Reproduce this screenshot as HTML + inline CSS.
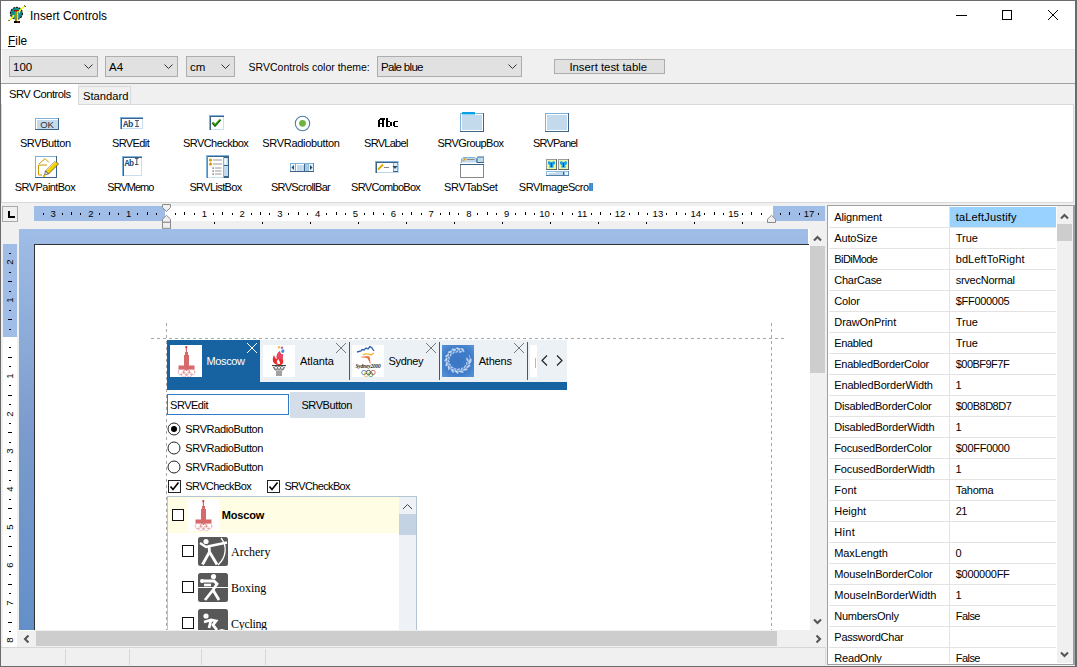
<!DOCTYPE html><html><head><meta charset="utf-8"><style>
html,body{margin:0;padding:0;}
body{width:1077px;height:667px;position:relative;overflow:hidden;background:#f0f0f0;font-family:"Liberation Sans",sans-serif;}
div{position:absolute;box-sizing:border-box;}
.t{position:absolute;white-space:nowrap;}
</style></head><body>
<div style="left:0px;top:0px;width:1077px;height:50px;background:#fff;"></div>
<div style="left:0px;top:49px;width:1077px;height:1px;background:#e8e8e8;"></div>
<svg style="position:absolute;left:6px;top:4px;" width="22" height="22" viewBox="0 0 22 22"><circle cx="10.4" cy="9.3" r="6" fill="#0f8c8c" stroke="#000" stroke-width="1.1" stroke-dasharray="2 1"/>
<rect x="9" y="6.5" width="2.3" height="10.5" fill="#9a9400"/><rect x="11.3" y="7" width="0.9" height="10" fill="#fff"/>
<rect x="8" y="6" width="5" height="1.3" fill="#b00000"/>
<rect x="8" y="17" width="6" height="2" fill="#000"/><rect x="11" y="17" width="1.5" height="2" fill="#c00000"/>
<path d="M3 16.5 L7.5 12.5 L8 11.5 M13 8 L14 6 L18.5 2" stroke="#ffff00" stroke-width="1.4" fill="none"/>
<path d="M6 11.5 L8.5 10.5 L7.5 13.5 Z M12.5 7 L15 6 L13.5 9.5 Z" fill="#ffff00"/>
<path d="M2.5 17 L3.5 16" stroke="#000" stroke-width="1"/><path d="M18.5 1.5 L19.5 3" stroke="#000" stroke-width="1"/></svg>
<span class="t " style="left:30px;top:11px;font-size:11.85px;line-height:11.85px;color:#000;">Insert Controls</span>
<div style="left:956px;top:15px;width:11px;height:1px;background:#000;"></div>
<div style="left:1002px;top:10px;width:10px;height:10px;border:1px solid #000;"></div>
<svg style="position:absolute;left:1047px;top:9px;" width="12" height="12" viewBox="0 0 12 12"><path d="M1 1 L11 11 M11 1 L1 11" stroke="#000" stroke-width="1"/></svg>
<span class="t " style="left:8px;top:36px;font-size:11.85px;line-height:11.85px;color:#000;"><u style="text-underline-offset:1px">F</u>ile</span>
<div style="left:0px;top:83px;width:1077px;height:1px;background:#a0a0a0;"></div>
<div style="left:1px;top:50px;width:1px;height:33px;background:#fff;"></div>
<div style="left:9px;top:56px;width:89px;height:21px;background:#e1e1e1;border:1px solid #adadad;"></div>
<span class="t " style="left:13px;top:62px;font-size:11.5px;line-height:11.5px;color:#000;">100</span>
<svg style="position:absolute;left:84px;top:64px;" width="9" height="5" viewBox="0 0 9 5"><path d="M0.5 0.5 L4.5 4.5 L8.5 0.5" stroke="#333" stroke-width="1" fill="none"/></svg>
<div style="left:105px;top:56px;width:73px;height:21px;background:#e1e1e1;border:1px solid #adadad;"></div>
<span class="t " style="left:109px;top:62px;font-size:11.5px;line-height:11.5px;color:#000;">A4</span>
<svg style="position:absolute;left:164px;top:64px;" width="9" height="5" viewBox="0 0 9 5"><path d="M0.5 0.5 L4.5 4.5 L8.5 0.5" stroke="#333" stroke-width="1" fill="none"/></svg>
<div style="left:186px;top:56px;width:49px;height:21px;background:#e1e1e1;border:1px solid #adadad;"></div>
<span class="t " style="left:190px;top:62px;font-size:11.5px;line-height:11.5px;color:#000;">cm</span>
<svg style="position:absolute;left:221px;top:64px;" width="9" height="5" viewBox="0 0 9 5"><path d="M0.5 0.5 L4.5 4.5 L8.5 0.5" stroke="#333" stroke-width="1" fill="none"/></svg>
<span class="t " style="left:248.6px;top:62px;font-size:10.5px;line-height:10.5px;color:#000;">SRVControls color theme:</span>
<div style="left:377px;top:56px;width:145px;height:21px;background:#e1e1e1;border:1px solid #adadad;"></div>
<span class="t " style="left:381px;top:62px;font-size:11.5px;line-height:11.5px;color:#000;letter-spacing:-0.680px;">Pale blue</span>
<svg style="position:absolute;left:508px;top:64px;" width="9" height="5" viewBox="0 0 9 5"><path d="M0.5 0.5 L4.5 4.5 L8.5 0.5" stroke="#333" stroke-width="1" fill="none"/></svg>
<div style="left:554px;top:59px;width:111px;height:15px;background:#e1e1e1;border:1px solid #adadad;"></div>
<span class="t " style="left:569.4px;top:62px;font-size:11.36px;line-height:11.36px;color:#000;">Insert test table</span>
<div style="left:1px;top:84px;width:77px;height:21px;background:#fff;"></div>
<div style="left:78px;top:86px;width:53px;height:19px;background:#f0f0f0;border:1px solid #d9d9d9;border-bottom:none;"></div>
<span class="t " style="left:9px;top:89px;font-size:11.2px;line-height:11.2px;color:#000;letter-spacing:-0.506px;">SRV Controls</span>
<span class="t " style="left:83px;top:91px;font-size:11.2px;line-height:11.2px;color:#000;">Standard</span>
<div style="left:1px;top:104px;width:1073px;height:99px;background:#fff;border:1px solid #d9d9d9;border-top:none;"></div>
<div style="left:78px;top:104px;width:996px;height:1px;background:#d9d9d9;"></div>
<span class="t " style="left:19.9px;top:138px;font-size:11px;line-height:11px;color:#000;letter-spacing:-0.383px;">SRVButton</span>
<span class="t " style="left:112.0px;top:138px;font-size:11px;line-height:11px;color:#000;letter-spacing:-0.615px;">SRVEdit</span>
<span class="t " style="left:182.9px;top:138px;font-size:11px;line-height:11px;color:#000;letter-spacing:-0.536px;">SRVCheckbox</span>
<span class="t " style="left:262.3px;top:138px;font-size:11px;line-height:11px;color:#000;letter-spacing:-0.315px;">SRVRadiobutton</span>
<span class="t " style="left:364.0px;top:138px;font-size:11px;line-height:11px;color:#000;letter-spacing:-0.708px;">SRVLabel</span>
<span class="t " style="left:437.5px;top:138px;font-size:11px;line-height:11px;color:#000;letter-spacing:-0.548px;">SRVGroupBox</span>
<span class="t " style="left:533.0px;top:138px;font-size:11px;line-height:11px;color:#000;letter-spacing:-0.797px;">SRVPanel</span>
<span class="t " style="left:14.8px;top:182px;font-size:11px;line-height:11px;color:#000;letter-spacing:-0.558px;">SRVPaintBox</span>
<span class="t " style="left:107.3px;top:182px;font-size:11px;line-height:11px;color:#000;letter-spacing:-0.981px;">SRVMemo</span>
<span class="t " style="left:189.4px;top:182px;font-size:11px;line-height:11px;color:#000;letter-spacing:-0.624px;">SRVListBox</span>
<span class="t " style="left:270.9px;top:182px;font-size:11px;line-height:11px;color:#000;letter-spacing:-0.650px;">SRVScrollBar</span>
<span class="t " style="left:351.1px;top:182px;font-size:11px;line-height:11px;color:#000;letter-spacing:-0.706px;">SRVComboBox</span>
<span class="t " style="left:444.1px;top:182px;font-size:11px;line-height:11px;color:#000;letter-spacing:-0.363px;">SRVTabSet</span>
<span class="t " style="left:518.8px;top:182px;font-size:11px;line-height:11px;color:#000;letter-spacing:-0.478px;">SRVImageScroll</span>
<svg style="position:absolute;left:35px;top:118px;" width="24" height="12" viewBox="0 0 24 12"><rect x="0" y="0" width="24" height="12" fill="#3b6488"/><rect x="0" y="0" width="23" height="11" fill="#7fb2da"/>
<rect x="1" y="1" width="22" height="10" fill="#fff"/><rect x="2" y="2" width="21" height="9" fill="#c3d9ec"/>
<text x="12" y="10" font-family="Liberation Sans" font-size="9.5" text-anchor="middle" fill="#333">OK</text></svg>
<svg style="position:absolute;left:120px;top:117px;" width="23" height="12" viewBox="0 0 23 12"><rect x="0" y="0" width="23" height="12" fill="#c9def0"/><rect x="0" y="0" width="23" height="2" fill="#3b6488"/><rect x="0" y="0" width="2" height="12" fill="#3b6488"/>
<rect x="0" y="0" width="23" height="1" fill="#7fb2da"/><rect x="0" y="0" width="1" height="12" fill="#7fb2da"/>
<rect x="2" y="2" width="20" height="9" fill="#fff"/>
<text x="3" y="10" font-family="Liberation Mono" font-weight="bold" font-size="9" fill="#1f4b70" letter-spacing="-0.5">Ab</text>
<path d="M15 3.5 H19 M17 3.5 V9.5 M15 9.5 H19" stroke="#555" stroke-width="1" fill="none"/></svg>
<svg style="position:absolute;left:209px;top:115px;" width="15" height="15" viewBox="0 0 15 15"><rect x="0" y="0" width="15" height="15" fill="#c9def0"/><rect x="0" y="0" width="15" height="2" fill="#3b6488"/><rect x="0" y="0" width="2" height="15" fill="#3b6488"/>
<rect x="0" y="0" width="15" height="1" fill="#7fb2da"/><rect x="0" y="0" width="1" height="15" fill="#7fb2da"/>
<rect x="2" y="2" width="12" height="12" fill="#fff"/>
<path d="M3.5 7.5 L6 10.5 L11.5 4.5" stroke="#0d6a0d" stroke-width="2.2" fill="none"/><path d="M3.5 7 L6 9.5 L11 4" stroke="#7cc22a" stroke-width="1" fill="none"/></svg>
<svg style="position:absolute;left:294px;top:115px;" width="17" height="17" viewBox="0 0 17 17"><circle cx="8.5" cy="8.5" r="7.2" fill="#fff" stroke="#4d7ea8" stroke-width="1.1"/>
<circle cx="8.5" cy="8.3" r="3.4" fill="#6db33f"/></svg>
<svg style="position:absolute;left:377px;top:117px;" width="22" height="11" viewBox="0 0 22 11"><g fill="#000" shape-rendering="crispEdges"><rect x="3" y="1" width="5" height="1"/><rect x="2" y="2" width="6" height="1"/><rect x="1" y="3" width="2" height="7"/><rect x="5" y="1" width="2" height="9"/><rect x="3" y="6" width="2" height="1"/><rect x="9" y="1" width="2" height="9"/><rect x="11" y="4" width="2" height="1"/><rect x="13" y="5" width="2" height="4"/><rect x="11" y="9" width="2" height="1"/><rect x="12" y="4" width="1" height="1"/><rect x="12" y="9" width="1" height="1"/><rect x="16" y="5" width="2" height="4"/><rect x="17" y="4" width="4" height="1"/><rect x="17" y="9" width="4" height="1"/></g></svg>
<svg style="position:absolute;left:460px;top:112px;" width="25" height="20" viewBox="0 0 25 20"><rect x="0" y="1" width="24" height="19" fill="#3b6488"/><rect x="0" y="1" width="23" height="18" fill="#7fb2da"/>
<rect x="1" y="2" width="22" height="17" fill="#fff"/><rect x="2" y="3" width="20" height="15" fill="#c3d9ec"/>
<rect x="2" y="0" width="13" height="2.5" rx="0.5" fill="#0aa0e8"/></svg>
<svg style="position:absolute;left:545px;top:113px;" width="24" height="19" viewBox="0 0 24 19"><rect x="0" y="0" width="24" height="19" fill="#3b6488"/><rect x="0" y="0" width="23" height="18" fill="#7fb2da"/>
<rect x="1" y="1" width="22" height="17" fill="#fff"/><rect x="2" y="2" width="20" height="15" fill="#c3d9ec"/></svg>
<svg style="position:absolute;left:35px;top:156px;" width="25" height="22" viewBox="0 0 25 22"><rect x="0" y="0" width="22" height="22" fill="#3b6488"/><rect x="0" y="0" width="21" height="21" fill="#7fb2da"/><rect x="1" y="1" width="20" height="20" fill="#fff"/>
<path d="M3.5 9 V19 H7 M3.5 9 H12 M4 8 L10 2.5 L14 6.5" stroke="#c99a00" stroke-width="1" fill="none"/>
<path d="M10.5 15 L20.5 5 L23.5 8 L13.5 18 Z" fill="#f4d000" stroke="#3a3a3a" stroke-width="0.7"/><path d="M11.5 14.5 L21 5" stroke="#fff3a0" stroke-width="0.8"/><path d="M10.5 15 L13.5 18 L9.5 19 Z" fill="#e0e0e0" stroke="#333" stroke-width="0.6"/>
<rect x="8" y="19" width="2" height="2" fill="#f3b400"/></svg>
<svg style="position:absolute;left:122px;top:156px;" width="20" height="20" viewBox="0 0 20 20"><rect x="0" y="0" width="20" height="20" fill="#c9def0"/><rect x="0" y="0" width="20" height="2" fill="#3b6488"/><rect x="0" y="0" width="2" height="20" fill="#3b6488"/>
<rect x="0" y="0" width="20" height="1" fill="#7fb2da"/><rect x="0" y="0" width="1" height="20" fill="#7fb2da"/>
<rect x="2" y="2" width="17" height="17" fill="#fff"/>
<text x="2.5" y="10" font-family="Liberation Mono" font-weight="bold" font-size="8.5" fill="#1f4b70" letter-spacing="-0.6">Ab</text>
<path d="M13 2.5 H16.5 M14.8 2.5 V8.5 M13 8.5 H16.5" stroke="#555" stroke-width="1" fill="none"/></svg>
<svg style="position:absolute;left:206px;top:155px;" width="23" height="23" viewBox="0 0 23 23"><rect x="0" y="0" width="23" height="23" fill="#3b6488"/><rect x="0" y="0" width="1.5" height="23" fill="#7fb2da"/><rect x="0" y="0" width="23" height="1" fill="#7fb2da"/>
<rect x="2" y="2" width="15.5" height="20" fill="#fff"/><rect x="2" y="22" width="15.5" height="1" fill="#c9def0"/>
<rect x="18" y="3" width="4" height="18" fill="#c3d9ec"/><rect x="18.5" y="3.5" width="2" height="6" fill="#fff"/>
<rect x="18" y="10" width="4" height="1" fill="#3b6488"/>
<circle cx="4.5" cy="5" r="1.6" fill="#d89b00"/><circle cx="4.5" cy="9" r="1.6" fill="#d89b00"/>
<rect x="7" y="4.5" width="9" height="1" fill="#999"/><rect x="7" y="8.5" width="9" height="1" fill="#999"/>
<rect x="6.5" y="12.5" width="1.2" height="1.2" fill="#333"/><rect x="9" y="12.5" width="6.5" height="1" fill="#999"/>
<rect x="6.5" y="15.5" width="1.2" height="1.2" fill="#333"/><rect x="9" y="15.5" width="6.5" height="1" fill="#999"/>
<rect x="6.5" y="18.5" width="1.2" height="1.2" fill="#333"/><rect x="9" y="18.5" width="6.5" height="1" fill="#999"/></svg>
<svg style="position:absolute;left:290px;top:163px;" width="24" height="9" viewBox="0 0 24 9"><rect x="0" y="0" width="24" height="9" fill="#3b6488"/><rect x="0" y="0" width="23.5" height="8" fill="#7fb2da"/>
<rect x="1" y="1" width="4" height="7" fill="#e8f3fb"/><rect x="19" y="1" width="4" height="7" fill="#e8f3fb"/>
<rect x="6" y="1" width="8" height="7" fill="#fff"/><rect x="7" y="2" width="7" height="6" fill="#c3d9ec"/>
<rect x="14" y="1" width="1" height="7" fill="#3b6488"/><rect x="15" y="1" width="3.5" height="7" fill="#a9c9e4"/>
<path d="M4 2 L1.5 4.5 L4 7 Z" fill="#1f4b70"/><path d="M20 2 L22.5 4.5 L20 7 Z" fill="#1f4b70"/></svg>
<svg style="position:absolute;left:375px;top:161px;" width="24" height="12" viewBox="0 0 24 12"><rect x="0" y="0" width="24" height="12" fill="#bcd6ee"/><rect x="0" y="0" width="23" height="2" fill="#3b6488"/><rect x="0" y="0" width="2" height="12" fill="#3b6488"/>
<rect x="0" y="0" width="23" height="1" fill="#7fb2da"/><rect x="0" y="0" width="1" height="12" fill="#7fb2da"/>
<rect x="2" y="2" width="16" height="9" fill="#fff"/><rect x="18" y="2" width="5" height="9" fill="#3b6488"/><rect x="18.5" y="2" width="4" height="8" fill="#e0eef9"/>
<path d="M3 8.5 L8 3.5" stroke="#e3a600" stroke-width="1.8"/><rect x="9" y="6" width="5" height="1" fill="#888"/>
<path d="M17.5 5 H22.5 L20 8 Z" fill="#1f4b70"/></svg>
<svg style="position:absolute;left:460px;top:156px;" width="24" height="22" viewBox="0 0 24 22"><path d="M0.5 6.5 H1.5 V3 L3 1.5 H15 L16.5 3 V6.5" fill="#c3d9ec" stroke="#7fb2da" stroke-width="1"/>
<path d="M17 6.5 V2.5 L18 1 H24 V6.5 Z" fill="#c3d9ec" stroke="#3b6488" stroke-width="1"/><rect x="17" y="0.5" width="7" height="1" fill="#7fb2da"/>
<path d="M3 5 L6 2" stroke="#e3a600" stroke-width="1.6"/><rect x="7" y="3" width="7.5" height="1" fill="#888"/>
<rect x="0" y="8" width="24" height="14" fill="#888"/><rect x="0" y="8" width="24" height="1.2" fill="#3b6488"/><rect x="1" y="9" width="22" height="12" fill="#fff"/></svg>
<svg style="position:absolute;left:546px;top:159px;" width="23" height="17" viewBox="0 0 23 17"><g><rect x="0" y="0" width="11" height="11" fill="#333"/><rect x="0" y="0" width="10.5" height="10.5" fill="#9a9a9a"/><rect x="1" y="1" width="9" height="9" fill="#e6f8a8"/><path d="M5.5 4 C4.5 1.5 1.5 1.5 2 4 C2 5.5 3 6 4.2 6 C2.8 7 3 9 4.5 8.8 C5 8.6 5.3 8 5.5 7.5 C5.7 8 6 8.6 6.5 8.8 C8 9 8.2 7 6.8 6 C8 6 9 5.5 9 4 C9.5 1.5 6.5 1.5 5.5 4 Z" fill="#1aa0e8"/><rect x="5.1" y="3.5" width="0.8" height="5" fill="#135"/></g><g transform="translate(12,0)"><rect x="0" y="0" width="11" height="11" fill="#333"/><rect x="0" y="0" width="10.5" height="10.5" fill="#9a9a9a"/><rect x="1" y="1" width="9" height="9" fill="#e6f8a8"/><path d="M5.5 4 C4.5 1.5 1.5 1.5 2 4 C2 5.5 3 6 4.2 6 C2.8 7 3 9 4.5 8.8 C5 8.6 5.3 8 5.5 7.5 C5.7 8 6 8.6 6.5 8.8 C8 9 8.2 7 6.8 6 C8 6 9 5.5 9 4 C9.5 1.5 6.5 1.5 5.5 4 Z" fill="#1aa0e8"/><rect x="5.1" y="3.5" width="0.8" height="5" fill="#135"/></g>
<rect x="0" y="12" width="23" height="5" fill="#3b6488"/><rect x="0" y="12" width="22.5" height="4.3" fill="#8fbde0"/><rect x="1" y="13" width="3" height="3" fill="#e8f3fb"/><rect x="19" y="13" width="3" height="3" fill="#e8f3fb"/>
<rect x="3" y="13" width="14" height="3" fill="#c3d9ec"/><rect x="3" y="13" width="7" height="1" fill="#fff"/><rect x="17" y="13" width="1" height="3" fill="#3b6488"/></svg>
<div style="left:2px;top:206px;width:16px;height:16px;background:#f0f0f0;border:1px solid #a9a9a9;"></div>
<svg style="position:absolute;left:8px;top:211px;" width="7" height="8" viewBox="0 0 7 8"><path d="M1 0 V6 H7" stroke="#000" stroke-width="2" fill="none"/></svg>
<div style="left:34px;top:206px;width:791px;height:15px;background:#9fbde6;"></div>
<div style="left:165px;top:206px;width:608px;height:15px;background:#fff;"></div>
<svg style="position:absolute;left:34px;top:206px;" width="791" height="15" viewBox="0 0 791 15"><rect x="9" y="7" width="1" height="2" fill="#000"/><rect x="28" y="7" width="1" height="2" fill="#000"/><rect x="37" y="6" width="1" height="3" fill="#000"/><rect x="46" y="7" width="1" height="2" fill="#000"/><rect x="65" y="7" width="1" height="2" fill="#000"/><rect x="75" y="6" width="1" height="3" fill="#000"/><rect x="84" y="7" width="1" height="2" fill="#000"/><rect x="103" y="7" width="1" height="2" fill="#000"/><rect x="113" y="6" width="1" height="3" fill="#000"/><rect x="122" y="7" width="1" height="2" fill="#000"/><rect x="141" y="7" width="1" height="2" fill="#000"/><rect x="150" y="6" width="1" height="3" fill="#000"/><rect x="160" y="7" width="1" height="2" fill="#000"/><rect x="179" y="7" width="1" height="2" fill="#000"/><rect x="188" y="6" width="1" height="3" fill="#000"/><rect x="198" y="7" width="1" height="2" fill="#000"/><rect x="217" y="7" width="1" height="2" fill="#000"/><rect x="226" y="6" width="1" height="3" fill="#000"/><rect x="235" y="7" width="1" height="2" fill="#000"/><rect x="254" y="7" width="1" height="2" fill="#000"/><rect x="264" y="6" width="1" height="3" fill="#000"/><rect x="273" y="7" width="1" height="2" fill="#000"/><rect x="292" y="7" width="1" height="2" fill="#000"/><rect x="302" y="6" width="1" height="3" fill="#000"/><rect x="311" y="7" width="1" height="2" fill="#000"/><rect x="330" y="7" width="1" height="2" fill="#000"/><rect x="339" y="6" width="1" height="3" fill="#000"/><rect x="349" y="7" width="1" height="2" fill="#000"/><rect x="368" y="7" width="1" height="2" fill="#000"/><rect x="377" y="6" width="1" height="3" fill="#000"/><rect x="387" y="7" width="1" height="2" fill="#000"/><rect x="406" y="7" width="1" height="2" fill="#000"/><rect x="415" y="6" width="1" height="3" fill="#000"/><rect x="424" y="7" width="1" height="2" fill="#000"/><rect x="443" y="7" width="1" height="2" fill="#000"/><rect x="453" y="6" width="1" height="3" fill="#000"/><rect x="462" y="7" width="1" height="2" fill="#000"/><rect x="481" y="7" width="1" height="2" fill="#000"/><rect x="491" y="6" width="1" height="3" fill="#000"/><rect x="500" y="7" width="1" height="2" fill="#000"/><rect x="519" y="7" width="1" height="2" fill="#000"/><rect x="528" y="6" width="1" height="3" fill="#000"/><rect x="538" y="7" width="1" height="2" fill="#000"/><rect x="557" y="7" width="1" height="2" fill="#000"/><rect x="566" y="6" width="1" height="3" fill="#000"/><rect x="576" y="7" width="1" height="2" fill="#000"/><rect x="595" y="7" width="1" height="2" fill="#000"/><rect x="604" y="6" width="1" height="3" fill="#000"/><rect x="613" y="7" width="1" height="2" fill="#000"/><rect x="632" y="7" width="1" height="2" fill="#000"/><rect x="642" y="6" width="1" height="3" fill="#000"/><rect x="651" y="7" width="1" height="2" fill="#000"/><rect x="670" y="7" width="1" height="2" fill="#000"/><rect x="680" y="6" width="1" height="3" fill="#000"/><rect x="689" y="7" width="1" height="2" fill="#000"/><rect x="708" y="7" width="1" height="2" fill="#000"/><rect x="717" y="6" width="1" height="3" fill="#000"/><rect x="727" y="7" width="1" height="2" fill="#000"/><rect x="746" y="7" width="1" height="2" fill="#000"/><rect x="755" y="6" width="1" height="3" fill="#000"/><rect x="765" y="7" width="1" height="2" fill="#000"/><rect x="784" y="7" width="1" height="2" fill="#000"/></svg>
<span class="t" style="left:-46.89999999999999px;width:200px;text-align:center;top:209px;font-size:9.5px;line-height:9.5px;color:#000;">3</span>
<span class="t" style="left:-9.099999999999994px;width:200px;text-align:center;top:209px;font-size:9.5px;line-height:9.5px;color:#000;">2</span>
<span class="t" style="left:28.69999999999999px;width:200px;text-align:center;top:209px;font-size:9.5px;line-height:9.5px;color:#000;">1</span>
<span class="t" style="left:104.30000000000001px;width:200px;text-align:center;top:209px;font-size:9.5px;line-height:9.5px;color:#000;">1</span>
<span class="t" style="left:142.1px;width:200px;text-align:center;top:209px;font-size:9.5px;line-height:9.5px;color:#000;">2</span>
<span class="t" style="left:179.89999999999998px;width:200px;text-align:center;top:209px;font-size:9.5px;line-height:9.5px;color:#000;">3</span>
<span class="t" style="left:217.7px;width:200px;text-align:center;top:209px;font-size:9.5px;line-height:9.5px;color:#000;">4</span>
<span class="t" style="left:255.5px;width:200px;text-align:center;top:209px;font-size:9.5px;line-height:9.5px;color:#000;">5</span>
<span class="t" style="left:293.29999999999995px;width:200px;text-align:center;top:209px;font-size:9.5px;line-height:9.5px;color:#000;">6</span>
<span class="t" style="left:331.09999999999997px;width:200px;text-align:center;top:209px;font-size:9.5px;line-height:9.5px;color:#000;">7</span>
<span class="t" style="left:368.9px;width:200px;text-align:center;top:209px;font-size:9.5px;line-height:9.5px;color:#000;">8</span>
<span class="t" style="left:406.7px;width:200px;text-align:center;top:209px;font-size:9.5px;line-height:9.5px;color:#000;">9</span>
<span class="t" style="left:444.5px;width:200px;text-align:center;top:209px;font-size:9.5px;line-height:9.5px;color:#000;">10</span>
<span class="t" style="left:482.29999999999995px;width:200px;text-align:center;top:209px;font-size:9.5px;line-height:9.5px;color:#000;">11</span>
<span class="t" style="left:520.0999999999999px;width:200px;text-align:center;top:209px;font-size:9.5px;line-height:9.5px;color:#000;">12</span>
<span class="t" style="left:557.9px;width:200px;text-align:center;top:209px;font-size:9.5px;line-height:9.5px;color:#000;">13</span>
<span class="t" style="left:595.6999999999999px;width:200px;text-align:center;top:209px;font-size:9.5px;line-height:9.5px;color:#000;">14</span>
<span class="t" style="left:633.5px;width:200px;text-align:center;top:209px;font-size:9.5px;line-height:9.5px;color:#000;">15</span>
<span class="t" style="left:709.0999999999999px;width:200px;text-align:center;top:209px;font-size:9.5px;line-height:9.5px;color:#000;">17</span>
<svg style="position:absolute;left:166px;top:222px;" width="620" height="3" viewBox="0 0 620 3"><rect x="48.0" y="0" width="1" height="2" fill="#000"/><rect x="96.0" y="0" width="1" height="2" fill="#000"/><rect x="144.0" y="0" width="1" height="2" fill="#000"/><rect x="192.0" y="0" width="1" height="2" fill="#000"/><rect x="240.0" y="0" width="1" height="2" fill="#000"/><rect x="288.0" y="0" width="1" height="2" fill="#000"/><rect x="336.0" y="0" width="1" height="2" fill="#000"/><rect x="384.0" y="0" width="1" height="2" fill="#000"/><rect x="432.0" y="0" width="1" height="2" fill="#000"/><rect x="480.0" y="0" width="1" height="2" fill="#000"/><rect x="528.0" y="0" width="1" height="2" fill="#000"/><rect x="576.0" y="0" width="1" height="2" fill="#000"/></svg>
<svg style="position:absolute;left:162px;top:204px;" width="10" height="25" viewBox="0 0 10 25"><path d="M0.5 0.5 H8.5 V3.5 L4.5 7.5 L0.5 3.5 Z" fill="#f0f0f0" stroke="#8a8a8a" stroke-width="1"/>
<path d="M4.5 11.3 L8.5 15.2 V18.3 H0.5 V15.2 Z" fill="#f0f0f0" stroke="#8a8a8a" stroke-width="1"/>
<rect x="0.5" y="18.3" width="8" height="6" fill="#f0f0f0" stroke="#8a8a8a" stroke-width="1"/></svg>
<svg style="position:absolute;left:767px;top:214px;" width="10" height="10" viewBox="0 0 10 10"><path d="M4.5 1.3 L8.5 5.2 V8.5 H0.5 V5.2 Z" fill="#f0f0f0" stroke="#8a8a8a" stroke-width="1"/></svg>
<div style="left:19px;top:229px;width:789px;height:401px;background:linear-gradient(#9fbde6 0%,#7a9bcc 51%,#6390c8 100%);"></div>
<div style="left:34px;top:244px;width:774px;height:386px;background:#fff;border-left:1px solid #333;border-top:1px solid #333;"></div>
<div style="left:3px;top:244px;width:14px;height:403px;background:#fff;"></div>
<div style="left:3px;top:244px;width:14px;height:93px;background:#9fbde6;"></div>
<svg style="position:absolute;left:3px;top:244px;" width="14" height="403" viewBox="0 0 14 403"><rect x="6" y="9" width="2" height="1" fill="#000"/><rect x="6" y="28" width="2" height="1" fill="#000"/><rect x="5" y="37" width="4" height="1" fill="#000"/><rect x="6" y="47" width="2" height="1" fill="#000"/><rect x="6" y="66" width="2" height="1" fill="#000"/><rect x="5" y="75" width="4" height="1" fill="#000"/><rect x="6" y="85" width="2" height="1" fill="#000"/><rect x="6" y="103" width="2" height="1" fill="#000"/><rect x="5" y="113" width="4" height="1" fill="#000"/><rect x="6" y="122" width="2" height="1" fill="#000"/><rect x="6" y="141" width="2" height="1" fill="#000"/><rect x="5" y="151" width="4" height="1" fill="#000"/><rect x="6" y="160" width="2" height="1" fill="#000"/><rect x="6" y="179" width="2" height="1" fill="#000"/><rect x="5" y="188" width="4" height="1" fill="#000"/><rect x="6" y="198" width="2" height="1" fill="#000"/><rect x="6" y="217" width="2" height="1" fill="#000"/><rect x="5" y="226" width="4" height="1" fill="#000"/><rect x="6" y="236" width="2" height="1" fill="#000"/><rect x="6" y="255" width="2" height="1" fill="#000"/><rect x="5" y="264" width="4" height="1" fill="#000"/><rect x="6" y="274" width="2" height="1" fill="#000"/><rect x="6" y="292" width="2" height="1" fill="#000"/><rect x="5" y="302" width="4" height="1" fill="#000"/><rect x="6" y="311" width="2" height="1" fill="#000"/><rect x="6" y="330" width="2" height="1" fill="#000"/><rect x="5" y="340" width="4" height="1" fill="#000"/><rect x="6" y="349" width="2" height="1" fill="#000"/><rect x="6" y="368" width="2" height="1" fill="#000"/><rect x="5" y="378" width="4" height="1" fill="#000"/><rect x="6" y="387" width="2" height="1" fill="#000"/></svg>
<span class="t" style="left:0px;top:256.4px;width:20px;text-align:center;font-size:9.5px;line-height:12px;transform:rotate(-90deg);">2</span>
<span class="t" style="left:0px;top:294.2px;width:20px;text-align:center;font-size:9.5px;line-height:12px;transform:rotate(-90deg);">1</span>
<span class="t" style="left:0px;top:369.8px;width:20px;text-align:center;font-size:9.5px;line-height:12px;transform:rotate(-90deg);">1</span>
<span class="t" style="left:0px;top:407.6px;width:20px;text-align:center;font-size:9.5px;line-height:12px;transform:rotate(-90deg);">2</span>
<span class="t" style="left:0px;top:445.4px;width:20px;text-align:center;font-size:9.5px;line-height:12px;transform:rotate(-90deg);">3</span>
<span class="t" style="left:0px;top:483.2px;width:20px;text-align:center;font-size:9.5px;line-height:12px;transform:rotate(-90deg);">4</span>
<span class="t" style="left:0px;top:521.0px;width:20px;text-align:center;font-size:9.5px;line-height:12px;transform:rotate(-90deg);">5</span>
<span class="t" style="left:0px;top:558.8px;width:20px;text-align:center;font-size:9.5px;line-height:12px;transform:rotate(-90deg);">6</span>
<span class="t" style="left:0px;top:596.6px;width:20px;text-align:center;font-size:9.5px;line-height:12px;transform:rotate(-90deg);">7</span>
<span class="t" style="left:0px;top:634.4px;width:20px;text-align:center;font-size:9.5px;line-height:12px;transform:rotate(-90deg);">8</span>
<div style="left:167px;top:340px;width:400px;height:50px;background:#1763a1;"></div>
<div style="left:260px;top:340px;width:307px;height:42px;background:#ecf1f6;"></div>
<div style="left:170px;top:345px;width:32px;height:32px;background:#fff;"></div>
<svg style="position:absolute;left:170px;top:345px;" width="32" height="32" viewBox="0 0 32 32"><circle cx="16.3" cy="2.2" r="1.1" fill="#d33"/><rect x="15.8" y="3" width="1.2" height="5" fill="#d7686c"/>
<rect x="15" y="7" width="3" height="4" fill="#d7686c"/><rect x="14" y="10" width="5" height="13" fill="#d7686c"/>
<path d="M8.5 20.5 H14.5 L16.5 23 L18.5 20.5 H24.5 V24.5 H19 L16.5 26 L14 24.5 H8.5 Z" fill="#d7686c"/>
<g fill="none" stroke="#e08a8e" stroke-width="1" stroke-dasharray="1.2 0.6"><circle cx="11" cy="27" r="2.8"/><circle cx="16.5" cy="27" r="2.8"/><circle cx="22" cy="27" r="2.8"/><circle cx="13.7" cy="29.5" r="2.5"/><circle cx="19.3" cy="29.5" r="2.5"/></g></svg>
<span class="t " style="left:206.5px;top:356px;font-size:11px;line-height:11px;color:#fff;letter-spacing:-0.369px;">Moscow</span>
<svg style="position:absolute;left:246px;top:342px;" width="12" height="12" viewBox="0 0 12 12"><path d="M1 1 L11 11 M11 1 L1 11" stroke="#fff" stroke-width="1"/></svg>
<div style="left:263px;top:345px;width:32px;height:32px;background:#fff;"></div>
<svg style="position:absolute;left:263px;top:345px;" width="32" height="32" viewBox="0 0 32 32"><path d="M15 20 C9 19 9 14 11 10 C12 13 13 14 14 14 C13 11 14 8 17 6 C17 9 19 10 20 9 C20 12 19 14 20 15 C21 18 19 20 17 20 Z" fill="#ee2b2b"/>
<path d="M14 14 C13 11 14 8 17 6 C17 9 19 10 20 9 C20 12 19 14 20 15 C18 14 16 13 14 14 Z" fill="#e8446a"/>
<path d="M15 19 C13 17 14 15 15.5 14 C16 16 17.5 17 17 19 Z" fill="#fff"/>
<circle cx="16" cy="2.2" r="1.3" fill="#f3c04a"/><circle cx="19" cy="2.8" r="1.2" fill="#b660b0"/><path d="M18 6 L20 4 L21.5 5.5 L21 7.5 L19 8 Z" fill="#3d8ee0"/>
<path d="M9 20.5 H23" stroke="#444" stroke-width="1"/><path d="M10 21.5 L12 25 H20 L22 21.5" stroke="#555" stroke-width="0.8" fill="none"/>
<g fill="none" stroke="#555" stroke-width="0.7"><circle cx="13" cy="22.8" r="1.5"/><circle cx="16" cy="22.8" r="1.5"/><circle cx="19" cy="22.8" r="1.5"/></g>
<path d="M14 26 V31 M16 26 V31 M18 26 V31" stroke="#444" stroke-width="1"/></svg>
<span class="t " style="left:300px;top:356px;font-size:11px;line-height:11px;color:#000;letter-spacing:-0.047px;">Atlanta</span>
<svg style="position:absolute;left:335px;top:342px;" width="12" height="12" viewBox="0 0 12 12"><path d="M1 1 L11 11 M11 1 L1 11" stroke="#777" stroke-width="1"/></svg>
<div style="left:349px;top:342px;width:1px;height:38px;background:#555;"></div>
<div style="left:352px;top:345px;width:32px;height:32px;background:#fff;"></div>
<svg style="position:absolute;left:352px;top:345px;" width="32" height="32" viewBox="0 0 32 32"><path d="M5 7 L9 6 L10 4.5 L12 5 L14 3 L16 4 L18 1.5 L20 3 L22 6" stroke="#2b5fae" stroke-width="1.3" fill="none"/>
<path d="M11 10 C14 8 17 9 19 10 L22 8" stroke="#f2b82c" stroke-width="1.4" fill="none"/>
<path d="M8.5 12 C12 11 15 11 17.5 11.5 C18 14 18.5 17 18.5 19.5 C17 17 16.5 14 15 13 C13 12.8 10.5 12.8 8.5 12 Z" fill="#ef6a35"/>
<text x="3.5" y="23" font-family="Liberation Serif" font-style="italic" font-weight="bold" font-size="6.5" fill="#222" letter-spacing="-0.2" textLength="25" lengthAdjust="spacingAndGlyphs">Sydney2000</text>
<g fill="none" stroke-width="0.8"><circle cx="12" cy="27.5" r="2.2" stroke="#3a7cc8"/><circle cx="16.5" cy="27.5" r="2.2" stroke="#333"/><circle cx="21" cy="27.5" r="2.2" stroke="#d94a3a"/><circle cx="14.2" cy="29.5" r="2.2" stroke="#e6b83a"/><circle cx="18.8" cy="29.5" r="2.2" stroke="#3a9a55"/></g></svg>
<span class="t " style="left:388.6px;top:356px;font-size:11px;line-height:11px;color:#000;letter-spacing:-0.364px;">Sydney</span>
<svg style="position:absolute;left:425px;top:342px;" width="12" height="12" viewBox="0 0 12 12"><path d="M1 1 L11 11 M11 1 L1 11" stroke="#777" stroke-width="1"/></svg>
<div style="left:439px;top:342px;width:1px;height:38px;background:#555;"></div>
<div style="left:442px;top:345px;width:32px;height:32px;background:radial-gradient(circle at 50% 50%,#3a76c4 0%,#3f7dca 60%,#5b95d6 100%);"></div>
<svg style="position:absolute;left:442px;top:345px;" width="32" height="32" viewBox="0 0 32 32"><g fill="#e3ecf8" opacity="0.72"><ellipse cx="28.0" cy="15.5" rx="2.4" ry="1" transform="rotate(125 28.0 15.5)"/><ellipse cx="25.4" cy="14.2" rx="1.8" ry="0.8" transform="rotate(55 25.4 14.2)"/><ellipse cx="20.9" cy="5.0" rx="2.4" ry="1" transform="rotate(59 20.9 5.0)"/><ellipse cx="18.5" cy="6.8" rx="1.8" ry="0.8" transform="rotate(-11 18.5 6.8)"/><ellipse cx="16.4" cy="4.0" rx="2.4" ry="1" transform="rotate(37 16.4 4.0)"/><ellipse cx="14.9" cy="6.6" rx="1.8" ry="0.8" transform="rotate(-33 14.9 6.6)"/><ellipse cx="11.9" cy="4.7" rx="2.4" ry="1" transform="rotate(15 11.9 4.7)"/><ellipse cx="11.5" cy="7.6" rx="1.8" ry="0.8" transform="rotate(-55 11.5 7.6)"/><ellipse cx="8.0" cy="7.0" rx="2.4" ry="1" transform="rotate(-7 8.0 7.0)"/><ellipse cx="8.7" cy="9.8" rx="1.8" ry="0.8" transform="rotate(-77 8.7 9.8)"/><ellipse cx="5.2" cy="10.5" rx="2.4" ry="1" transform="rotate(-29 5.2 10.5)"/><ellipse cx="6.9" cy="12.8" rx="1.8" ry="0.8" transform="rotate(-99 6.9 12.8)"/><ellipse cx="4.0" cy="14.7" rx="2.4" ry="1" transform="rotate(-51 4.0 14.7)"/><ellipse cx="6.5" cy="16.2" rx="1.8" ry="0.8" transform="rotate(-121 6.5 16.2)"/><ellipse cx="4.6" cy="19.1" rx="2.4" ry="1" transform="rotate(-73 4.6 19.1)"/><ellipse cx="7.5" cy="19.5" rx="1.8" ry="0.8" transform="rotate(-143 7.5 19.5)"/><ellipse cx="6.8" cy="22.9" rx="2.4" ry="1" transform="rotate(-95 6.8 22.9)"/><ellipse cx="9.7" cy="22.3" rx="1.8" ry="0.8" transform="rotate(-165 9.7 22.3)"/><ellipse cx="10.4" cy="25.7" rx="2.4" ry="1" transform="rotate(-117 10.4 25.7)"/><ellipse cx="12.8" cy="24.0" rx="1.8" ry="0.8" transform="rotate(-187 12.8 24.0)"/><ellipse cx="14.7" cy="26.9" rx="2.4" ry="1" transform="rotate(-139 14.7 26.9)"/><ellipse cx="16.4" cy="24.5" rx="1.8" ry="0.8" transform="rotate(-209 16.4 24.5)"/><ellipse cx="19.3" cy="26.6" rx="2.4" ry="1" transform="rotate(-161 19.3 26.6)"/><ellipse cx="20.0" cy="23.7" rx="1.8" ry="0.8" transform="rotate(-231 20.0 23.7)"/><ellipse cx="23.4" cy="24.6" rx="2.4" ry="1" transform="rotate(-183 23.4 24.6)"/><ellipse cx="22.9" cy="21.7" rx="1.8" ry="0.8" transform="rotate(-253 22.9 21.7)"/><ellipse cx="26.4" cy="21.3" rx="2.4" ry="1" transform="rotate(-205 26.4 21.3)"/><ellipse cx="24.8" cy="18.8" rx="1.8" ry="0.8" transform="rotate(-275 24.8 18.8)"/><ellipse cx="27.9" cy="17.1" rx="2.4" ry="1" transform="rotate(-227 27.9 17.1)"/><ellipse cx="25.5" cy="15.4" rx="1.8" ry="0.8" transform="rotate(-297 25.5 15.4)"/></g><path d="M27 10 A12 11.5 0 1 1 21 4.5" fill="none" stroke="#e3ecf8" stroke-width="0.8" opacity="0.7"/></svg>
<span class="t " style="left:478.7px;top:356px;font-size:11px;line-height:11px;color:#000;letter-spacing:-0.196px;">Athens</span>
<svg style="position:absolute;left:513px;top:342px;" width="12" height="12" viewBox="0 0 12 12"><path d="M1 1 L11 11 M11 1 L1 11" stroke="#777" stroke-width="1"/></svg>
<div style="left:527px;top:342px;width:1px;height:38px;background:#555;"></div>
<div style="left:530px;top:345px;width:7px;height:32px;background:#fff;"></div>
<div style="left:535px;top:358px;width:1px;height:10px;background:#f1a0a0;"></div>
<svg style="position:absolute;left:540px;top:354px;" width="26" height="13" viewBox="0 0 26 13"><path d="M7 1.5 L2 6.5 L7 11.5" stroke="#222" stroke-width="1.2" fill="none"/><path d="M17 1.5 L22 6.5 L17 11.5" stroke="#222" stroke-width="1.2" fill="none"/></svg>
<div style="left:167px;top:394px;width:122px;height:21px;background:#fff;border:1px solid #2f7bc6;"></div>
<span class="t " style="left:170.1px;top:400px;font-size:11px;line-height:11px;color:#000;letter-spacing:-0.498px;">SRVEdit</span>
<div style="left:290px;top:392px;width:75px;height:26px;background:#d3deea;"></div>
<span class="t " style="left:301.4px;top:400px;font-size:11px;line-height:11px;color:#000;letter-spacing:-0.396px;">SRVButton</span>
<svg style="position:absolute;left:167px;top:421.6px;" width="14" height="14" viewBox="0 0 14 14"><circle cx="7" cy="7" r="6" fill="#fff" stroke="#222" stroke-width="1"/><circle cx="7" cy="7" r="3" fill="#000"/></svg>
<span class="t " style="left:185.3px;top:424px;font-size:11px;line-height:11px;color:#000;letter-spacing:-0.370px;">SRVRadioButton</span>
<svg style="position:absolute;left:167px;top:440.7px;" width="14" height="14" viewBox="0 0 14 14"><circle cx="7" cy="7" r="6" fill="#fff" stroke="#222" stroke-width="1"/></svg>
<span class="t " style="left:185.3px;top:443px;font-size:11px;line-height:11px;color:#000;letter-spacing:-0.370px;">SRVRadioButton</span>
<svg style="position:absolute;left:167px;top:459.6px;" width="14" height="14" viewBox="0 0 14 14"><circle cx="7" cy="7" r="6" fill="#fff" stroke="#222" stroke-width="1"/></svg>
<span class="t " style="left:185.3px;top:462px;font-size:11px;line-height:11px;color:#000;letter-spacing:-0.370px;">SRVRadioButton</span>
<svg style="position:absolute;left:168px;top:480px;" width="13" height="13" viewBox="0 0 13 13"><rect x="0.5" y="0.5" width="12" height="12" fill="#fff" stroke="#222" stroke-width="1"/><path d="M2.5 6.5 L5 9.5 L10.5 2.5" stroke="#000" stroke-width="1.6" fill="none"/></svg>
<svg style="position:absolute;left:267px;top:480px;" width="13" height="13" viewBox="0 0 13 13"><rect x="0.5" y="0.5" width="12" height="12" fill="#fff" stroke="#222" stroke-width="1"/><path d="M2.5 6.5 L5 9.5 L10.5 2.5" stroke="#000" stroke-width="1.6" fill="none"/></svg>
<span class="t " style="left:185.3px;top:481px;font-size:11px;line-height:11px;color:#000;letter-spacing:-0.618px;">SRVCheckBox</span>
<span class="t " style="left:284.4px;top:481px;font-size:11px;line-height:11px;color:#000;letter-spacing:-0.638px;">SRVCheckBox</span>
<div style="left:167px;top:496px;width:250px;height:134px;background:#fff;border:1px solid #b3c6d6;border-bottom:none;"></div>
<div style="left:168px;top:497px;width:231px;height:36px;background:#fffde3;"></div>
<svg style="position:absolute;left:172px;top:509px;" width="12" height="12" viewBox="0 0 12 12"><rect x="0.5" y="0.5" width="11" height="11" fill="#fff" stroke="#111" stroke-width="1"/></svg>
<div style="left:187px;top:499px;width:32px;height:32px;background:#fff;"></div>
<svg style="position:absolute;left:187px;top:499px;" width="32" height="32" viewBox="0 0 32 32"><circle cx="16.3" cy="2.2" r="1.1" fill="#d33"/><rect x="15.8" y="3" width="1.2" height="5" fill="#d7686c"/>
<rect x="15" y="7" width="3" height="4" fill="#d7686c"/><rect x="14" y="10" width="5" height="13" fill="#d7686c"/>
<path d="M8.5 20.5 H14.5 L16.5 23 L18.5 20.5 H24.5 V24.5 H19 L16.5 26 L14 24.5 H8.5 Z" fill="#d7686c"/>
<g fill="none" stroke="#e08a8e" stroke-width="1" stroke-dasharray="1.2 0.6"><circle cx="11" cy="27" r="2.8"/><circle cx="16.5" cy="27" r="2.8"/><circle cx="22" cy="27" r="2.8"/><circle cx="13.7" cy="29.5" r="2.5"/><circle cx="19.3" cy="29.5" r="2.5"/></g></svg>
<span class="t " style="left:221.8px;top:510px;font-size:11px;line-height:11px;color:#000;letter-spacing:-0.181px;font-weight:bold;">Moscow</span>
<svg style="position:absolute;left:182px;top:545px;" width="12" height="12" viewBox="0 0 12 12"><rect x="0.5" y="0.5" width="11" height="11" fill="#fff" stroke="#111" stroke-width="1"/></svg>
<svg style="position:absolute;left:198px;top:537px;" width="30" height="29" viewBox="0 0 30 29"><rect x="0" y="0" width="30" height="29" rx="2.5" fill="#585858"/><circle cx="8" cy="4.5" r="2.6" fill="#fff"/><path d="M2 6 L8 10 L12 9 L29 5.5" stroke="#fff" stroke-width="2.4" fill="none"/><path d="M11 9 L11.5 15 L4.5 27.5 M11.5 15 L19 27.5" stroke="#fff" stroke-width="2.8" fill="none"/><path d="M23 1 C29 8 29 20 20 28" stroke="#fff" stroke-width="1.3" fill="none"/></svg>
<span class="t " style="left:231px;top:546px;font-size:12px;line-height:12px;color:#000;letter-spacing:0.012px;font-family:'Liberation Serif',serif;">Archery</span>
<svg style="position:absolute;left:182px;top:581px;" width="12" height="12" viewBox="0 0 12 12"><rect x="0.5" y="0.5" width="11" height="11" fill="#fff" stroke="#111" stroke-width="1"/></svg>
<svg style="position:absolute;left:198px;top:573px;" width="30" height="29" viewBox="0 0 30 29"><rect x="0" y="0" width="30" height="29" rx="2.5" fill="#585858"/><circle cx="15.5" cy="3.5" r="2.6" fill="#fff"/><path d="M3 8 H16 L19 11 L15 17 L7 27 M15 17 L21 27" stroke="#fff" stroke-width="2.8" fill="none"/><path d="M6 12 H13" stroke="#fff" stroke-width="2.6"/><rect x="0" y="14" width="30" height="1" fill="#fff"/><circle cx="4" cy="8" r="2" fill="#fff"/></svg>
<span class="t " style="left:231px;top:582px;font-size:12px;line-height:12px;color:#000;letter-spacing:-0.006px;font-family:'Liberation Serif',serif;">Boxing</span>
<svg style="position:absolute;left:182px;top:617px;" width="12" height="12" viewBox="0 0 12 12"><rect x="0.5" y="0.5" width="11" height="11" fill="#fff" stroke="#111" stroke-width="1"/></svg>
<svg style="position:absolute;left:198px;top:609px;" width="30" height="29" viewBox="0 0 30 29"><rect x="0" y="0" width="30" height="29" rx="2.5" fill="#585858"/><circle cx="8" cy="7" r="2.6" fill="#fff"/><path d="M6 13 L13 11 L18 12 L15 16 L19 21 M13 11 L11 19" stroke="#fff" stroke-width="2.8" fill="none"/><path d="M2 27 C5 21 9 21 12 24 M19 23 C22 20 26 20 30 24" stroke="#fff" stroke-width="1.4" fill="none"/></svg>
<span class="t " style="left:231px;top:618px;font-size:12px;line-height:12px;color:#000;letter-spacing:-0.314px;font-family:'Liberation Serif',serif;">Cycling</span>
<div style="left:399px;top:497px;width:17px;height:133px;background:#eef2f7;"></div>
<div style="left:399px;top:514px;width:17px;height:21px;background:#c3d3e3;"></div>
<svg style="position:absolute;left:402px;top:503px;" width="11" height="8" viewBox="0 0 11 8"><path d="M1 6 L5.5 1.5 L10 6" stroke="#444" stroke-width="1" fill="none"/></svg>
<div style="left:808px;top:229px;width:2px;height:401px;background:#fff;"></div>
<div style="left:808px;top:244px;width:1px;height:1px;background:#333;"></div>
<div style="left:810px;top:229px;width:16px;height:401px;background:#f0f0f0;"></div>
<div style="left:810px;top:246px;width:15px;height:127px;background:#cdcdcd;"></div>
<svg style="position:absolute;left:812px;top:233px;" width="11" height="10" viewBox="0 0 11 10"><path d="M2 7.5 L5.5 4 L9 7.5" stroke="#555" stroke-width="2.1" fill="none"/></svg>
<svg style="position:absolute;left:812px;top:617px;" width="11" height="10" viewBox="0 0 11 10"><path d="M2 2.5 L5.5 6 L9 2.5" stroke="#555" stroke-width="2.1" fill="none"/></svg>
<div style="left:19px;top:630px;width:807px;height:17px;background:#f0f0f0;"></div>
<div style="left:19px;top:630px;width:15px;height:1px;background:#fff;"></div>
<div style="left:36px;top:631px;width:741px;height:15px;background:#cdcdcd;"></div>
<svg style="position:absolute;left:23px;top:634px;" width="8" height="11" viewBox="0 0 8 11"><path d="M5.5 1.5 L2 5 L5.5 8.5" stroke="#555" stroke-width="2.1" fill="none"/></svg>
<svg style="position:absolute;left:815px;top:634px;" width="8" height="11" viewBox="0 0 8 11"><path d="M1.5 1.5 L5 5 L1.5 8.5" stroke="#555" stroke-width="2.1" fill="none"/></svg>
<div style="left:1px;top:647px;width:825px;height:1px;background:#d7d7d7;"></div>
<div style="left:825px;top:648px;width:1px;height:17px;background:#dcdcdc;"></div>
<div style="left:65px;top:649px;width:1px;height:16px;background:#d7d7d7;"></div>
<div style="left:129px;top:649px;width:1px;height:16px;background:#d7d7d7;"></div>
<div style="left:201px;top:649px;width:1px;height:16px;background:#d7d7d7;"></div>
<div style="left:265px;top:649px;width:1px;height:16px;background:#d7d7d7;"></div>
<div style="left:151px;top:338px;width:634px;height:1px;background:repeating-linear-gradient(90deg,#a8a8a8 0 3px,transparent 3px 6px);"></div>
<div style="left:166px;top:323px;width:1px;height:307px;background:repeating-linear-gradient(180deg,#a8a8a8 0 3px,transparent 3px 6px);"></div>
<div style="left:771px;top:323px;width:1px;height:307px;background:repeating-linear-gradient(180deg,#a8a8a8 0 3px,transparent 3px 6px);"></div>
<div style="left:827px;top:205px;width:248px;height:460px;background:#f0f0f0;"></div>
<div style="left:827px;top:205px;width:248px;height:460px;background:#fff;border:1px solid #a0a0a0;"></div>
<div style="left:950px;top:207px;width:106px;height:20px;background:#99d1ff;"></div>
<span class="t " style="left:834.3px;top:212px;font-size:11px;line-height:11px;color:#000;letter-spacing:-0.155px;">Alignment</span>
<span class="t " style="left:955.7px;top:212px;font-size:11px;line-height:11px;color:#000;letter-spacing:0.179px;">taLeftJustify</span>
<div style="left:829px;top:227px;width:227px;height:1px;background:#e3e3e3;"></div>
<span class="t " style="left:834.3px;top:233px;font-size:11px;line-height:11px;color:#000;letter-spacing:-0.152px;">AutoSize</span>
<span class="t " style="left:955.7px;top:233px;font-size:11px;line-height:11px;color:#000;letter-spacing:-0.006px;">True</span>
<div style="left:829px;top:248px;width:227px;height:1px;background:#e3e3e3;"></div>
<span class="t " style="left:834.3px;top:254px;font-size:11px;line-height:11px;color:#000;letter-spacing:-0.584px;">BiDiMode</span>
<span class="t " style="left:955.7px;top:254px;font-size:11px;line-height:11px;color:#000;letter-spacing:0.072px;">bdLeftToRight</span>
<div style="left:829px;top:269px;width:227px;height:1px;background:#e3e3e3;"></div>
<span class="t " style="left:834.3px;top:275px;font-size:11px;line-height:11px;color:#000;letter-spacing:-0.262px;">CharCase</span>
<span class="t " style="left:955.7px;top:275px;font-size:11px;line-height:11px;color:#000;letter-spacing:-0.242px;">srvecNormal</span>
<div style="left:829px;top:290px;width:227px;height:1px;background:#e3e3e3;"></div>
<span class="t " style="left:834.3px;top:296px;font-size:11px;line-height:11px;color:#000;letter-spacing:-0.145px;">Color</span>
<span class="t " style="left:955.7px;top:296px;font-size:11px;line-height:11px;color:#000;letter-spacing:-0.289px;">$FF000005</span>
<div style="left:829px;top:311px;width:227px;height:1px;background:#e3e3e3;"></div>
<span class="t " style="left:834.3px;top:317px;font-size:11px;line-height:11px;color:#000;letter-spacing:-0.107px;">DrawOnPrint</span>
<span class="t " style="left:955.7px;top:317px;font-size:11px;line-height:11px;color:#000;letter-spacing:-0.006px;">True</span>
<div style="left:829px;top:332px;width:227px;height:1px;background:#e3e3e3;"></div>
<span class="t " style="left:834.3px;top:338px;font-size:11px;line-height:11px;color:#000;letter-spacing:-0.351px;">Enabled</span>
<span class="t " style="left:955.7px;top:338px;font-size:11px;line-height:11px;color:#000;letter-spacing:-0.006px;">True</span>
<div style="left:829px;top:353px;width:227px;height:1px;background:#e3e3e3;"></div>
<span class="t " style="left:834.3px;top:359px;font-size:11px;line-height:11px;color:#000;letter-spacing:-0.278px;">EnabledBorderColor</span>
<span class="t " style="left:955.7px;top:359px;font-size:11px;line-height:11px;color:#000;letter-spacing:-0.516px;">$00BF9F7F</span>
<div style="left:829px;top:374px;width:227px;height:1px;background:#e3e3e3;"></div>
<span class="t " style="left:834.3px;top:380px;font-size:11px;line-height:11px;color:#000;letter-spacing:-0.168px;">EnabledBorderWidth</span>
<span class="t " style="left:955.5px;top:380px;font-size:11px;line-height:11px;color:#000;">1</span>
<div style="left:829px;top:395px;width:227px;height:1px;background:#e3e3e3;"></div>
<span class="t " style="left:834.3px;top:401px;font-size:11px;line-height:11px;color:#000;letter-spacing:-0.257px;">DisabledBorderColor</span>
<span class="t " style="left:955.7px;top:401px;font-size:11px;line-height:11px;color:#000;letter-spacing:-0.471px;">$00B8D8D7</span>
<div style="left:829px;top:416px;width:227px;height:1px;background:#e3e3e3;"></div>
<span class="t " style="left:834.3px;top:422px;font-size:11px;line-height:11px;color:#000;letter-spacing:-0.204px;">DisabledBorderWidth</span>
<span class="t " style="left:955.5px;top:422px;font-size:11px;line-height:11px;color:#000;">1</span>
<div style="left:829px;top:437px;width:227px;height:1px;background:#e3e3e3;"></div>
<span class="t " style="left:834.3px;top:443px;font-size:11px;line-height:11px;color:#000;letter-spacing:-0.225px;">FocusedBorderColor</span>
<span class="t " style="left:955.7px;top:443px;font-size:11px;line-height:11px;color:#000;letter-spacing:-0.264px;">$00FF0000</span>
<div style="left:829px;top:458px;width:227px;height:1px;background:#e3e3e3;"></div>
<span class="t " style="left:834.3px;top:464px;font-size:11px;line-height:11px;color:#000;letter-spacing:-0.157px;">FocusedBorderWidth</span>
<span class="t " style="left:955.5px;top:464px;font-size:11px;line-height:11px;color:#000;">1</span>
<div style="left:829px;top:479px;width:227px;height:1px;background:#e3e3e3;"></div>
<span class="t " style="left:834.3px;top:485px;font-size:11px;line-height:11px;color:#000;letter-spacing:0.123px;">Font</span>
<span class="t " style="left:955.7px;top:485px;font-size:11px;line-height:11px;color:#000;letter-spacing:-0.231px;">Tahoma</span>
<div style="left:829px;top:500px;width:227px;height:1px;background:#e3e3e3;"></div>
<span class="t " style="left:834.3px;top:506px;font-size:11px;line-height:11px;color:#000;letter-spacing:-0.002px;">Height</span>
<span class="t " style="left:955.7px;top:506px;font-size:11px;line-height:11px;color:#000;letter-spacing:-0.550px;">21</span>
<div style="left:829px;top:521px;width:227px;height:1px;background:#e3e3e3;"></div>
<span class="t " style="left:834.3px;top:527px;font-size:11px;line-height:11px;color:#000;letter-spacing:0.312px;">Hint</span>
<div style="left:829px;top:542px;width:227px;height:1px;background:#e3e3e3;"></div>
<span class="t " style="left:834.3px;top:548px;font-size:11px;line-height:11px;color:#000;letter-spacing:-0.109px;">MaxLength</span>
<span class="t " style="left:955.5px;top:548px;font-size:11px;line-height:11px;color:#000;">0</span>
<div style="left:829px;top:563px;width:227px;height:1px;background:#e3e3e3;"></div>
<span class="t " style="left:834.3px;top:569px;font-size:11px;line-height:11px;color:#000;letter-spacing:-0.184px;">MouseInBorderColor</span>
<span class="t " style="left:955.7px;top:569px;font-size:11px;line-height:11px;color:#000;letter-spacing:-0.264px;">$000000FF</span>
<div style="left:829px;top:584px;width:227px;height:1px;background:#e3e3e3;"></div>
<span class="t " style="left:834.3px;top:590px;font-size:11px;line-height:11px;color:#000;letter-spacing:-0.069px;">MouseInBorderWidth</span>
<span class="t " style="left:955.5px;top:590px;font-size:11px;line-height:11px;color:#000;">1</span>
<div style="left:829px;top:605px;width:227px;height:1px;background:#e3e3e3;"></div>
<span class="t " style="left:834.3px;top:611px;font-size:11px;line-height:11px;color:#000;letter-spacing:-0.265px;">NumbersOnly</span>
<span class="t " style="left:955.7px;top:611px;font-size:11px;line-height:11px;color:#000;letter-spacing:-0.527px;">False</span>
<div style="left:829px;top:626px;width:227px;height:1px;background:#e3e3e3;"></div>
<span class="t " style="left:834.3px;top:632px;font-size:11px;line-height:11px;color:#000;letter-spacing:-0.251px;">PasswordChar</span>
<div style="left:829px;top:647px;width:227px;height:1px;background:#e3e3e3;"></div>
<span class="t " style="left:834.3px;top:653px;font-size:11px;line-height:11px;color:#000;letter-spacing:-0.191px;">ReadOnly</span>
<span class="t " style="left:955.7px;top:653px;font-size:11px;line-height:11px;color:#000;letter-spacing:-0.527px;">False</span>
<div style="left:949px;top:206px;width:1px;height:457px;background:#e3e3e3;"></div>
<div style="left:828px;top:663px;width:246px;height:1px;background:#fff;"></div>
<div style="left:827px;top:664px;width:248px;height:1px;background:#a0a0a0;"></div>
<div style="left:827px;top:665px;width:248px;height:1px;background:#f0f0f0;"></div>
<div style="left:1056px;top:206px;width:18px;height:457px;background:#fff;"></div>
<div style="left:1057px;top:206px;width:16px;height:457px;background:#f0f0f0;"></div>
<div style="left:1057px;top:224px;width:15px;height:17px;background:#cdcdcd;"></div>
<svg style="position:absolute;left:1059px;top:211px;" width="11" height="10" viewBox="0 0 11 10"><path d="M2 7.5 L5.5 4 L9 7.5" stroke="#555" stroke-width="2.1" fill="none"/></svg>
<svg style="position:absolute;left:1059px;top:650px;" width="11" height="10" viewBox="0 0 11 10"><path d="M2 2.5 L5.5 6 L9 2.5" stroke="#555" stroke-width="2.1" fill="none"/></svg>
<div style="left:1073px;top:205px;width:1px;height:459px;background:#a0a0a0;"></div>
<div style="left:0px;top:0px;width:1px;height:667px;background:#6b6b6b;"></div>
<div style="left:1075px;top:0px;width:2px;height:667px;background:#6b6b6b;"></div>
<div style="left:0px;top:0px;width:1077px;height:1px;background:#6b6b6b;"></div>
<div style="left:0px;top:666px;width:1077px;height:1px;background:#6b6b6b;"></div></body></html>
